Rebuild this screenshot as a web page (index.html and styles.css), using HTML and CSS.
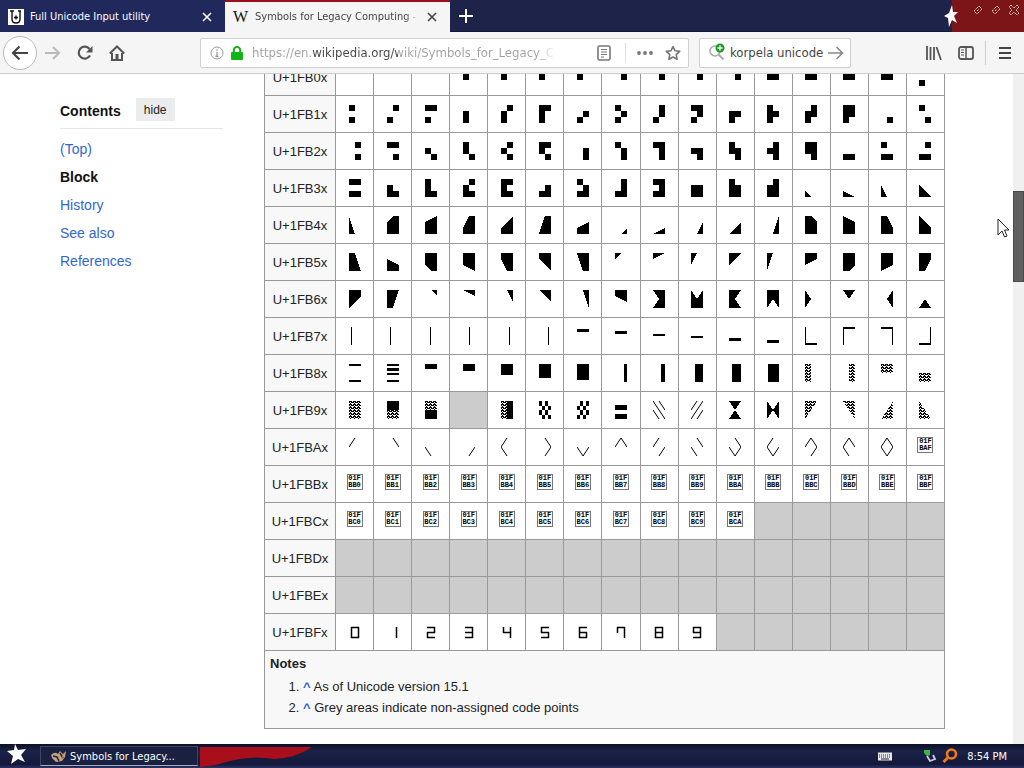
FILE: index.html
```html
<!DOCTYPE html>
<html lang="en">
<head>
  <meta charset="UTF-8">
  <meta name="viewport" content="width=device-width, initial-scale=1.0">
  <title>Symbols for Legacy Computing - Wikipedia</title>
  <link rel="stylesheet" href="styles.css">
</head>
<body>
  <header class="tabs">
    <div class="tab">
      <svg class="favicon" width="16" height="16" viewBox="0 0 16 16"><rect width="16" height="16" fill="#fff"/><path d="M2 2h4M10 2h3M4 2v8q0 4 4 4t4-4V2M6 8.500h4M8 6.500v4" fill="none" stroke="#111" stroke-width="1.400"/></svg>
      <span class="tab-title">Full Unicode Input utility</span>
      <button class="tab-close" aria-label="Close tab"><svg width="12" height="12" viewBox="0 0 12 12"><path d="M2 2l8 8M10 2l-8 8" stroke="currentColor" stroke-width="1.6"/></svg></button>
    </div>
    <div class="tab active">
      <span class="favicon wiki">W</span>
      <span class="tab-title">Symbols for Legacy Computing - Wikipedia</span>
      <button class="tab-close" aria-label="Close tab"><svg width="12" height="12" viewBox="0 0 12 12"><path d="M2 2l8 8M10 2l-8 8" stroke="currentColor" stroke-width="1.6"/></svg></button>
    </div>
    <button class="new-tab" aria-label="New tab"><svg width="14" height="14" viewBox="0 0 14 14"><path d="M7 0v14M0 7h14" stroke="#fff" stroke-width="2"/></svg></button>
    <svg class="title-star" width="14" height="24" viewBox="0 0 14 24"><path d="M8 1l1 7 5 0-4 4 3 7-5-3-3 7-1-9-4-2 5-3z" fill="#fff"/></svg>
    <div class="window-buttons">
      <button aria-label="Minimize"><svg width="12" height="12" viewBox="0 0 12 12"><path d="M2 7l5-5 3 3-5 5zM5 7l2-2" fill="none" stroke="#f0d8d0" stroke-dasharray="1.500 .7"/></svg></button>
      <button aria-label="Restore"><svg width="12" height="12" viewBox="0 0 12 12"><path d="M2 7l5-5 3 3-5 5zM5 7l2-2" fill="none" stroke="#f0d8d0" stroke-dasharray="1.500 .7"/></svg></button>
      <button aria-label="Close"><svg width="12" height="12" viewBox="0 0 12 12"><path d="M3 1l3 3 3-3 2 2-3 3 3 3-2 2-3-3-3 3-2-2 3-3-3-3z" fill="none" stroke="#f0d8d0" stroke-dasharray="1.500 .7"/></svg></button>
    </div>
  </header>

  <nav class="toolbar">
    <button class="back" aria-label="Back"><svg width="18" height="16" viewBox="0 0 18 16"><path d="M17 8H2M8.500 1.500L2 8l6.500 6.500" fill="none" stroke="#444" stroke-width="2.200"/></svg></button>
    <button class="tool" aria-label="Forward"><svg width="18" height="16" viewBox="0 0 18 16"><path d="M1 8h14M9 2l6 6-6 6" fill="none" stroke="#bbb" stroke-width="2"/></svg></button>
    <button class="tool" aria-label="Reload"><svg width="16" height="16" viewBox="0 0 16 16"><path d="M13 10.500A6 6 0 1 1 12.500 4" fill="none" stroke="#555" stroke-width="2.200"/><path d="M15.500 1v6.500H9z" fill="#555"/></svg></button>
    <button class="tool" aria-label="Home"><svg width="16" height="16" viewBox="0 0 16 16"><path d="M.8 8.500L8 1.500l7.200 7M3 8v7h10V8" fill="none" stroke="#555" stroke-width="2"/><path d="M6.500 9h3v6h-3z" fill="#555"/></svg></button>

    <div class="url-box">
      <svg width="14" height="14" viewBox="0 0 14 14"><circle cx="7" cy="7" r="6" fill="none" stroke="#999"/><path d="M7 6v4.500M7 3.200v1.600M5.500 10.500h3" stroke="#999" stroke-width="1.300"/></svg>
      <svg class="lock" width="12" height="14" viewBox="0 0 12 14"><rect y="6" width="12" height="8" rx="1" fill="#12b512"/><path d="M2.800 7V4a3.200 3 0 0 1 6.400 0v3" fill="none" stroke="#12b512" stroke-width="2"/></svg>
      <input class="url" type="text" aria-label="Address" value="https://en.wikipedia.org/wiki/Symbols_for_Legacy_Computing">
      <button class="mini" aria-label="Reader view"><svg width="14" height="16" viewBox="0 0 14 16"><rect x="1" y="1" width="12" height="14" rx="1.500" fill="none" stroke="#777" stroke-width="1.600"/><path d="M4 4.500h6M4 7h6M4 9.500h6M4 12h3" stroke="#777"/></svg></button>
      <span class="url-line"></span>
      <button class="mini" aria-label="Page actions"><svg width="16" height="4" viewBox="0 0 16 4"><g fill="#777"><circle cx="2" cy="2" r="1.900"/><circle cx="8" cy="2" r="1.900"/><circle cx="14" cy="2" r="1.900"/></g></svg></button>
      <button class="mini" aria-label="Bookmark"><svg width="16" height="16" viewBox="0 0 16 16"><path d="M8 1.500l2 4.300 4.700.6-3.500 3.200.9 4.700L8 12l-4.100 2.300.9-4.700L1.300 6.400 6 5.800z" fill="none" stroke="#777" stroke-width="1.600" stroke-linejoin="round"/></svg></button>
    </div>

    <div class="search-box">
      <svg width="20" height="20" viewBox="0 0 20 20"><circle cx="7" cy="8" r="5" fill="none" stroke="#aaa" stroke-width="1.600"/><path d="M10.500 11.500l5 5" stroke="#aaa" stroke-width="2"/><circle cx="12" cy="5" r="4.500" fill="#1e9b1e"/><path d="M12 2.500v5M9.500 5h5" stroke="#fff" stroke-width="1.400"/></svg>
      <input class="search" type="text" aria-label="Search" value="korpela unicode">
      <button class="mini" aria-label="Go"><svg width="16" height="14" viewBox="0 0 16 14"><path d="M0 7h14M8.500 1l6 6-6 6" fill="none" stroke="#888" stroke-width="1.600"/></svg></button>
    </div>

    <div class="toolbar-end">
      <button class="tool" aria-label="Library"><svg width="16" height="14" viewBox="0 0 16 14"><path d="M1 0v14M4.500 1v13M8 1v13M10.500 1l4.500 13" stroke="#555" stroke-width="1.800"/></svg></button>
      <button class="tool" aria-label="Sidebars"><svg width="16" height="14" viewBox="0 0 16 14"><rect x="1" y="1" width="14" height="12" rx="2" fill="none" stroke="#555" stroke-width="1.800"/><path d="M8 1v12" stroke="#555" stroke-width="1.500"/><path d="M3 4h3M3 6.500h3M3 9h3" stroke="#555"/></svg></button>
      <button class="menu" aria-label="Menu"><svg width="12" height="12" viewBox="0 0 12 12"><path d="M0 1h12M0 6h12M0 11h12" stroke="#444" stroke-width="2"/></svg></button>
    </div>
  </nav>

  <div class="page">
    <aside class="contents">
      <div class="contents-head">
        <h2>Contents</h2>
        <button class="hide">hide</button>
      </div>
      <ul>
        <li><a href="#top">(Top)</a></li>
        <li><a class="current" href="#block">Block</a></li>
        <li><a href="#history">History</a></li>
        <li><a href="#see-also">See also</a></li>
        <li><a href="#references">References</a></li>
      </ul>
    </aside>

    <main class="article">
      <table class="chart" id="block">
        <tbody id="rows"></tbody>
        <tfoot>
          <tr>
            <td class="notes" colspan="17">
              <b>Notes</b>
              <ol>
                <li><a href="#block">^</a> As of Unicode version 15.1</li>
                <li><a href="#block">^</a> Grey areas indicate non-assigned code points</li>
              </ol>
            </td>
          </tr>
        </tfoot>
      </table>
    </main>

    <div class="scrollbar"><div class="thumb"></div></div>
    <svg class="cursor" width="14" height="21" viewBox="0 0 14 21"><path d="M1 1v16l4-4 2.500 6 2.500-1-2.500-6H12z" fill="#fff" stroke="#222"/></svg>
  </div>

  <footer class="taskbar">
    <button class="start" aria-label="Start"><svg width="20" height="20" viewBox="0 0 20 20"><path d="M8 0l3 6 8-1-5 6 4 7-7-3-7 5 2-8-6-5 7-1z" fill="#fff"/></svg></button>
    <button class="task">
      <svg width="16" height="14" viewBox="0 0 16 14"><path d="M0 6q4-4 7-1l2-3 3 3 3-3-1 6-3 4-6 1-4-4z" fill="#b9a48c"/><path d="M2 7l4 1 2 4M9 4l3 5" stroke="#3c2416" stroke-width="1.600" fill="none"/><path d="M10 10l4-6" stroke="#e09038"/></svg>
      <span>Symbols for Legacy...</span>
    </button>
    <svg class="ribbon" width="116" height="22" viewBox="0 0 116 22"><path d="M2 2h112Q98 13 76 14 50 9 18 20L2 22z" fill="#a80f1a"/></svg>
    <div class="tray">
      <svg width="14" height="9" viewBox="0 0 14 9"><rect width="14" height="8" y=".5" fill="#e8e8e8"/><path d="M1 3h12M1 5h12" stroke="#223" stroke-dasharray="1 1"/><path d="M3 7h8" stroke="#223"/></svg>
      <svg class="safe" width="14" height="14" viewBox="0 0 14 14"><path d="M1 1h6v5l-3 1-3-3z" fill="#3cb83c"/><path d="M4 7l3 5 5-2-2-4" fill="none" stroke="#c8d0d8" stroke-width="1.800"/></svg>
      <svg width="16" height="16" viewBox="0 0 16 16"><circle cx="9.500" cy="6" r="4.500" fill="none" stroke="#f07818" stroke-width="2.600"/><path d="M6 9.500L1.500 14" stroke="#f07818" stroke-width="3"/></svg>
      <time>8:54 PM</time>
    </div>
  </footer>

  <svg width="0" height="0" class="defs">
    <defs>
      <pattern id="shade" width="4" height="3" patternUnits="userSpaceOnUse">
        <path d="M0 0h3v1H0zM2 1h2v1H2zM0 1h1v1H0zM1 2h1v1H1z"/>
      </pattern>
    </defs>
  </svg>
  <script src="chart.js"></script>
</body>
</html>
```

FILE: styles.css
```css
* {
  margin: 0;
  padding: 0;
  box-sizing: border-box;
}

body {
  display: flex;
  flex-direction: column;
  height: 100vh;
  overflow: hidden;
  background: #fff;
  color: #222;
  font-family: "Liberation Sans", Arial, sans-serif;
  font-size: 14px;
}

button {
  display: flex;
  align-items: center;
  justify-content: center;
  border: none;
  background: none;
  color: inherit;
  font: inherit;
}

svg {
  flex: none;
}

.tabs,
.toolbar,
.taskbar {
  flex: none;
  display: flex;
  align-items: center;
  font-family: "DejaVu Sans Condensed", "Noto Sans", sans-serif;
}

/* tab strip */
.tabs {
  height: 32px;
  background: #1d2349;
  border-bottom: 1px solid #14183a;
  color: #fff;
  font-size: 11px;
}

.tab {
  display: flex;
  align-items: center;
  width: 225px;
  height: 32px;
  padding: 2px 11px 0 8px;
  background: #20285c;
}

.tab.active {
  padding-top: 0;
  background: #f5f5f6;
  border-top: 2px solid #9a1018;
  color: #444;
}

.favicon {
  margin-right: 6px;
}

.wiki {
  width: 16px;
  color: #111;
  font: 16px/16px "Liberation Serif", serif;
}

.tab-title {
  flex: 1;
  overflow: hidden;
  white-space: nowrap;
}

.active .tab-title {
  -webkit-mask-image: linear-gradient(90deg, #000 150px, transparent 164px);
  mask-image: linear-gradient(90deg, #000 150px, transparent 164px);
}

.tab-close {
  width: 14px;
  height: 14px;
}

.new-tab {
  width: 32px;
  height: 32px;
}

.title-star {
  position: relative;
  z-index: 1;
  margin-left: auto;
  margin-right: -6px;
}

.window-buttons {
  display: flex;
  gap: 6px;
  width: 72px;
  height: 32px;
  padding: 4px 4px 0 20px;
  background: #7c1518;
}

.window-buttons button {
  width: 12px;
  height: 12px;
}

/* toolbar */
.toolbar {
  height: 42px;
  padding: 0 11px 0 3px;
  background: #f5f5f6;
  border-bottom: 1px solid #ccc;
  font-size: 13px;
}

.back {
  width: 34px;
  height: 34px;
  border: 1px solid #bbb;
  border-radius: 50%;
  background: #fff;
}

.tool {
  width: 32px;
  height: 32px;
}

.url-box,
.search-box {
  display: flex;
  align-items: center;
  height: 30px;
  background: #fff;
  border: 1px solid #d0d0d0;
  border-radius: 2px;
}

.url-box {
  flex: 1;
  margin-left: 67px;
  padding: 0 6px 0 9px;
}

.lock {
  margin: 0 9px 0 7px;
}

.url-box input,
.search-box input {
  flex: 1;
  min-width: 0;
  border: none;
  outline: none;
  background: none;
  color: #444;
  font: inherit;
}

/* the host name stands out and the tail fades away */
.url-box .url {
  margin-right: 39px;
  color: transparent;
  background: linear-gradient(90deg, #a0a0a0 60px, #444 60px, #444 146px, #a0a0a0 146px, #a0a0a0 284px, transparent 304px);
  -webkit-background-clip: text;
  background-clip: text;
}

.mini {
  width: 18px;
  height: 20px;
  margin-right: 10px;
}

.url-line {
  width: 1px;
  height: 20px;
  margin: 0 10px 0 2px;
  background: #e0e0e0;
}

.url-box .mini:last-child,
.search-box .mini {
  margin-right: 0;
}

.search-box {
  width: 152px;
  margin-left: 10px;
  padding: 0 5px 0 8px;
}

.search-box .search {
  margin-left: 2px;
}

.toolbar-end {
  display: flex;
  align-items: center;
  margin-left: 67px;
}

.menu {
  height: 24px;
  width: 28px;
  margin-left: 3px;
  padding-left: 10px;
  border-left: 1px solid #ccc;
}

/* page */
.page {
  position: relative;
  flex: 1;
  min-height: 0;
  display: flex;
  overflow: hidden;
}

.contents {
  flex: none;
  width: 223px;
  padding: 24px 0 0 60px;
}

.contents-head {
  display: flex;
  align-items: flex-start;
  gap: 15px;
  height: 31px;
  margin-bottom: 6px;
  border-bottom: 1px solid #e4e6ea;
}

.contents h2 {
  font-size: 14px;
  line-height: 27px;
  color: #111;
}

.hide {
  width: 39px;
  height: 23px;
  background: #ebecee;
  font-size: 12px;
}

.contents ul {
  list-style: none;
}

.contents li {
  line-height: 28px;
}

a {
  color: #36c;
  text-decoration: none;
}

.contents .current {
  color: #111;
  font-weight: bold;
}

.article {
  flex: 1;
  margin: -16px 68px 0 41px;
}

.chart {
  width: 100%;
  table-layout: fixed;
  border-collapse: collapse;
  background: #fff;
  font-size: 13px;
}

.chart th,
.chart td {
  height: 37px;
  border: 1px solid #999;
  text-align: center;
  vertical-align: middle;
}

.chart th {
  width: 71px;
  background: #f8f8f9;
  font-weight: normal;
}

.chart .unassigned {
  background: #ccc;
}

.glyph {
  display: block;
  margin: 0 auto;
}

.hex {
  display: block;
  width: 16px;
  height: 16px;
  margin: 0 auto 4px;
  border: 1px solid #777;
  color: #000;
  font: bold 7px/7px "Liberation Mono", monospace;
}

.chart .notes {
  height: 78px;
  padding: 3px 5px 9px;
  background: #f8f8f9;
  text-align: left;
  vertical-align: top;
  line-height: 20px;
}

.notes ol {
  padding: 2px 0 0 33px;
  line-height: 21px;
}

.notes a {
  font-weight: bold;
}

.scrollbar {
  width: 11px;
  padding-top: 117px;
  background: #f0f0f0;
}

.thumb {
  height: 91px;
  background: #606060;
  border: 1px solid #4a4a4a;
}

.cursor {
  position: absolute;
  top: 144px;
  right: 13px;
}

/* taskbar */
.taskbar {
  height: 24px;
  background: linear-gradient(#0c1024, #1c2248 30%, #14193a 85%, #2c3468);
  color: #fff;
  font-size: 11px;
}

.start {
  width: 34px;
  height: 20px;
  margin: 0 6px 4px 0;
}

.task {
  gap: 3px;
  width: 158px;
  height: 20px;
  padding-right: 12px;
  background: #1a2040;
  border: 1px solid #3c4468;
  border-bottom-color: #aab;
}

.tray {
  display: flex;
  align-items: center;
  margin-left: auto;
  padding-right: 17px;
}

.safe {
  margin: 0 5px 0 31px;
}

.tray time {
  margin-left: 9px;
}

.defs {
  position: absolute;
}
```

FILE: chart.js
```js
// Corner names on the 12x18 cell
const P = {
  a: '0,0', b: '6,0', c: '12,0',
  d: '0,6', e: '12,6',
  f: '0,12', g: '12,12',
  h: '0,18', i: '6,18', j: '12,18',
  m: '6,9', l: '0,9', r: '12,9'
};

const points = s => [...s].map(k => P[k]).join(' ');
const poly = (s, fill = '#000') => `<polygon points="${points(s)}" fill="${fill}"/>`;
const rect = (x, y, w, h, fill = '#000') => `<rect x="${x}" y="${y}" width="${w}" height="${h}" fill="${fill}"/>`;
const line = s => `<polyline points="${points(s)}" fill="none" stroke="#000" shape-rendering="auto"/>`;
const shade = 'url(#shade)';

// 1FB3C - 1FB6F
const wedges = ('fih fjh dih djh aih dbcjh dcjh fbcjh fcjh hbcj fejh igj hgj iej hej icj ' +
  'abejh aejh abgjh agjh abjh dgjh acjif acjf acjid acjd acji abd acd abf acf abh acef ' +
  'acgih acgh aceih aceh acih bce ace bcg acg bcj acgd ' +
  'acjhm ahjcm acmjh ahmjc ahm acm cjm hjm').split(' ');

// 1FBA0 - 1FBAE
const diagonals = 'bl br li ri bli bri lir lbr bl+ri br+li bril blir lbri rbli blirb'.split(' ');

// 1FB70 - 1FB9F
const blocks = [
  ...[2, 3, 5, 6, 8, 9].map(x => rect(x, 0, 1, 18)),
  rect(0, 2, 12, 3), rect(0, 4, 12, 3), rect(0, 7, 12, 2),
  rect(0, 9, 12, 2), rect(0, 11, 12, 3), rect(0, 13, 12, 3),
  rect(0, 0, 1, 18) + rect(0, 16, 12, 2),
  rect(0, 0, 1, 18) + rect(0, 0, 12, 2),
  rect(11, 0, 1, 18) + rect(0, 0, 12, 2),
  rect(11, 0, 1, 18) + rect(0, 16, 12, 2),
  rect(0, 0, 12, 2) + rect(0, 16, 12, 2),
  rect(0, 0, 12, 2) + rect(0, 4, 12, 3) + rect(0, 9, 12, 2) + rect(0, 16, 12, 2),
  ...[5, 7, 11, 14, 16].map(h => rect(0, 0, 12, h)),
  ...[3, 4, 8, 9, 11].map(w => rect(12 - w, 0, w, 18)),
  rect(0, 0, 6, 18, shade), rect(6, 0, 6, 18, shade),
  rect(0, 0, 12, 9, shade), rect(0, 9, 12, 9, shade),
  rect(0, 0, 12, 18, shade),
  rect(0, 0, 12, 9) + rect(0, 9, 12, 9, shade),
  rect(0, 0, 12, 9, shade) + rect(0, 9, 12, 9),
  null,
  rect(0, 0, 6, 18, shade) + rect(6, 0, 6, 18),
  checker(0), checker(1),
  rect(0, 4, 12, 5) + rect(0, 13, 12, 5),
  line('aj') + line('li') + line('br'),
  line('ch') + line('bl') + line('ri'),
  poly('acm') + poly('hjm'), poly('ahm') + poly('cjm'),
  poly('ach', shade), poly('acj', shade), poly('cjh', shade), poly('ajh', shade)
];

// segments lit for 0 - 9
const segments = {
  a: 'M2 4.500h8', b: 'M9.500 4v6', c: 'M9.500 9v6', d: 'M2 14.500h8',
  e: 'M2.500 9v6', f: 'M2.500 4v6', g: 'M2 9.500h8'
};
const digits = ['abcdef', 'bc', 'abdeg', 'abcdg', 'bcfg', 'acdfg', 'acdefg', 'abcf', 'abcdefg', 'abcdfg'];

function checker(start) {
  const rows = [0, 5, 9, 14, 18];
  let out = '';
  for (let y = 0; y < 4; y++) {
    for (let x = (y + start) % 2; x < 4; x += 2) {
      out += rect(x * 3, rows[y], 3, rows[y + 1] - rows[y]);
    }
  }
  return out;
}

function sextant(n) {
  let bits = n + 1;
  if (bits >= 21) bits++;
  if (bits >= 42) bits++;
  let out = '';
  for (let i = 0; i < 6; i++) {
    if (bits & (1 << i)) out += rect((i % 2) * 6, Math.floor(i / 2) * 6, 6, 6);
  }
  return out;
}

function cell(n) {
  let shape = null;
  if (n < 0x3c) shape = sextant(n);
  else if (n < 0x70) shape = poly(wedges[n - 0x3c]);
  else if (n < 0xa0) shape = blocks[n - 0x70];
  else if (n < 0xaf) shape = diagonals[n - 0xa0].split('+').map(line).join('');
  else if (n < 0xcb) {
    const code = n.toString(16).toUpperCase();
    return `<td><span class="hex">01F<br>B${code}</span></td>`;
  } else if (n >= 0xf0 && n < 0xfa) {
    const d = [...digits[n - 0xf0]].map(s => segments[s]).join('');
    shape = `<path d="${d}" fill="none" stroke="#000" stroke-width="1.500" shape-rendering="auto"/>`;
  }
  if (!shape) return '<td class="unassigned"></td>';
  return `<td><svg class="glyph" width="12" height="18" viewBox="0 0 12 18" shape-rendering="crispEdges">${shape}</svg></td>`;
}

let html = '';
for (let row = 0; row < 16; row++) {
  html += `<tr><th scope="row">U+1FB${row.toString(16).toUpperCase()}x</th>`;
  for (let col = 0; col < 16; col++) html += cell(row * 16 + col);
  html += '</tr>';
}
document.getElementById('rows').innerHTML = html;
```
